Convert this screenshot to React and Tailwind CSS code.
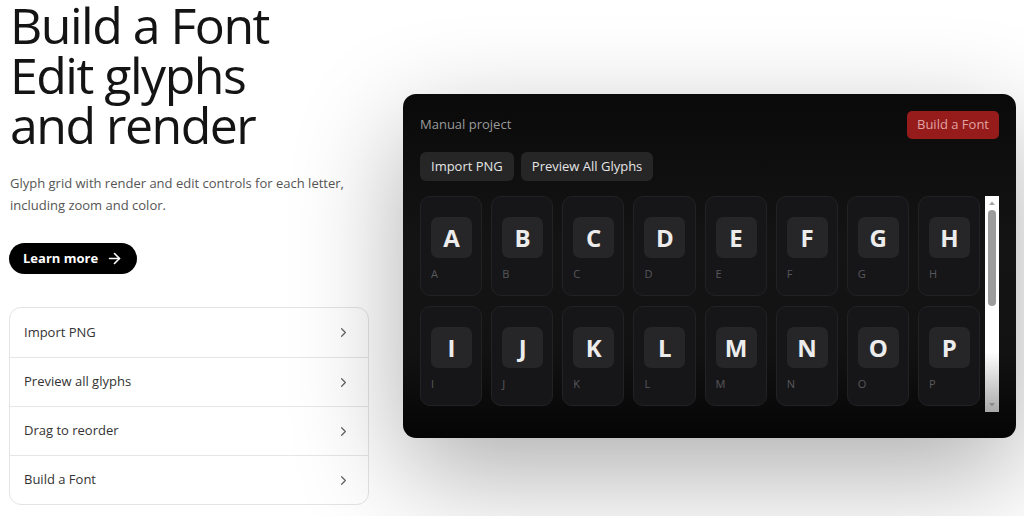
import React from 'react';
import { ArrowRight, ChevronRight } from 'lucide-react';

const letters = 'ABCDEFGHIJKLMNOPQRSTUVWXYZ'.split('');
const steps = ['Import PNG', 'Preview all glyphs', 'Drag to reorder', 'Build a Font'];

const GlyphTile = ({ ch }) => (
  <div className="h-[100px] rounded-[10px] border border-[#222224] bg-[#161618] pl-[10px] pt-[20px]">
    <div className="w-[41px] h-[41px] rounded-[7px] bg-[#262628] flex items-center justify-center text-[24px] font-bold text-[#ececec]">
      {ch}
    </div>
    <div className="mt-[9px] text-[11px] leading-[14px] text-[#58585c]">{ch}</div>
  </div>
);

const App = () => {
  return (
    <div
      className="w-[1024px] h-[516px] overflow-hidden bg-white flex gap-[34px] pl-[9px]"
      style={{ fontFamily: '"Open Sans", "Noto Sans", sans-serif' }}
    >
      {/* Left column */}
      <div className="w-[360px] shrink-0">
        <h1 className="pl-[1px] text-[50px] leading-[50px] font-medium tracking-[-0.03em] text-[#141414]">
          Build a Font
          <br />
          Edit glyphs
          <br />
          and render
        </h1>
        <p className="mt-[22px] pl-[1px] text-[13px] leading-[22px] text-[#555] whitespace-nowrap">
          Glyph grid with render and edit controls for each letter,
          <br />
          including zoom and color.
        </p>
        <button className="mt-[27px] h-[31px] px-[14px] rounded-full bg-black text-white text-[13px] font-bold flex items-center gap-[8px]">
          Learn more
          <ArrowRight size={17} strokeWidth={2.3} />
        </button>
        <div className="mt-[33px] rounded-[12px] border border-[#e4e4e4] bg-white">
          {steps.map((s, i) => (
            <div
              key={s}
              className={`h-[49px] px-[14px] flex items-center justify-between text-[13px] text-[#333] ${i > 0 ? 'border-t border-[#e6e6e6]' : ''}`}
            >
              {s}
              <ChevronRight size={15} className="text-[#666] mr-[3px]" />
            </div>
          ))}
        </div>
      </div>

      {/* Dark card */}
      <div className="mt-[94px] w-[613px] h-[344px] shrink-0 rounded-[13px] bg-[linear-gradient(180deg,#0a0a0a_0%,#141415_45%,#121213_75%,#050505_100%)] shadow-[0_36px_110px_rgba(0,0,0,0.32)] px-[17px] pt-[17px]">
        <div className="flex items-center justify-between h-[28px]">
          <span className="text-[13px] text-[#9a9a9a]">Manual project</span>
          <button className="h-[28px] px-[10px] rounded-[5px] bg-[#961b1b] text-[13px] text-[#e0a3a3]">
            Build a Font
          </button>
        </div>
        <div className="mt-[13px] flex gap-[7px]">
          <button className="h-[29px] px-[11px] rounded-[6px] bg-[#262627] text-[13px] text-[#e4e4e4]">Import PNG</button>
          <button className="h-[29px] px-[11px] rounded-[6px] bg-[#262627] text-[13px] text-[#e4e4e4]">Preview All Glyphs</button>
        </div>
        <div className="mt-[15px] flex h-[216px]">
          <div className="flex-1 overflow-hidden pr-[5px]">
            <div className="grid grid-cols-8 gap-x-[9px] gap-y-[10px]">
              {letters.map((l) => (
                <GlyphTile key={l} ch={l} />
              ))}
            </div>
          </div>
          {/* scrollbar */}
          <div className="w-[14px] h-full flex flex-col items-center bg-[linear-gradient(180deg,#fff_0%,#fff_72%,#a9a9a9_100%)]">
            <svg width="14" height="14" viewBox="0 0 14 14">
              <path d="M4 9h6L7 5.5z" fill="#a3a3a3" />
            </svg>
            <div className="w-[8px] h-[96px] rounded-full bg-[#9c9c9c]" />
            <div className="flex-1" />
            <svg width="14" height="14" viewBox="0 0 14 14">
              <path d="M4 5h6L7 8.5z" fill="#8a8a8a" />
            </svg>
          </div>
        </div>
      </div>
    </div>
  );
};

export default App;
